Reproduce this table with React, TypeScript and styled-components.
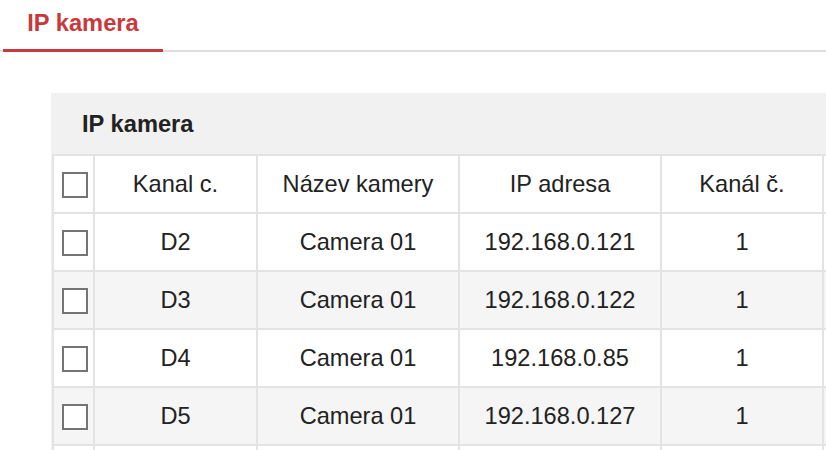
import React from "react";
import styled, { createGlobalStyle } from "styled-components";

type Camera = {
  channel: string;
  name: string;
  ip: string;
  channelNo: number;
};

const cameras: Camera[] = [
  { channel: "D2", name: "Camera 01", ip: "192.168.0.121", channelNo: 1 },
  { channel: "D3", name: "Camera 01", ip: "192.168.0.122", channelNo: 1 },
  { channel: "D4", name: "Camera 01", ip: "192.168.0.85", channelNo: 1 },
  { channel: "D5", name: "Camera 01", ip: "192.168.0.127", channelNo: 1 },
];

const GlobalStyle = createGlobalStyle`
  html, body {
    margin: 0;
    padding: 0;
    background: #ffffff;
    overflow: hidden;
    font-family: "Liberation Sans", Arial, sans-serif;
  }
`;

export default function App() {
  return (
    <Page>
      <GlobalStyle />
      <TabBar>
        <Tab $active>IP kamera</Tab>
      </TabBar>

      <Panel>
        <PanelTitle>IP kamera</PanelTitle>
        <Table>
          <colgroup>
            <col style={{ width: 41 }} />
            <col style={{ width: 163 }} />
            <col style={{ width: 202 }} />
            <col style={{ width: 202 }} />
            <col style={{ width: 162 }} />
            <col style={{ width: 200 }} />
          </colgroup>
          <thead>
            <Row>
              <CheckCell>
                <CheckBox />
              </CheckCell>
              <HeadCell>Kanal c.</HeadCell>
              <HeadCell>Název kamery</HeadCell>
              <HeadCell>IP adresa</HeadCell>
              <HeadCell>Kanál č.</HeadCell>
              <HeadCell />
            </Row>
          </thead>
          <tbody>
            {cameras.map((cam, idx) => (
              <Row key={cam.channel} $striped={idx % 2 === 1}>
                <CheckCell>
                  <CheckBox />
                </CheckCell>
                <Cell>{cam.channel}</Cell>
                <Cell>{cam.name}</Cell>
                <Cell>{cam.ip}</Cell>
                <Cell>{cam.channelNo}</Cell>
                <Cell />
              </Row>
            ))}
            {/* next row is cut off by the window edge */}
            <Row>
              <CheckCell />
              <Cell />
              <Cell />
              <Cell />
              <Cell />
              <Cell />
            </Row>
          </tbody>
        </Table>
      </Panel>
    </Page>
  );
}

const Page = styled.div`
  width: 826px;
  height: 450px;
  overflow: hidden;
`;

const TabBar = styled.div`
  display: flex;
  align-items: flex-end;
  height: 50px;
  border-bottom: 2px solid #dddddd;
`;

const Tab = styled.div<{ $active?: boolean }>`
  box-sizing: border-box;
  width: 160px;
  height: 51px;
  margin-left: 3px;
  margin-bottom: -2px;
  padding-top: 7px;
  text-align: center;
  font-size: 23.7px;
  line-height: 30px;
  font-weight: bold;
  color: ${({ $active }) => ($active ? "#c9383c" : "#333333")};
  border-bottom: 3px solid
    ${({ $active }) => ($active ? "#c9383c" : "transparent")};
`;

const Panel = styled.div`
  margin: 41px 0 0 51px;
  background: #f1f1f1;
  width: 1000px;
`;

const PanelTitle = styled.div`
  box-sizing: border-box;
  height: 61px;
  padding: 16px 0 0 31px;
  font-size: 23.7px;
  line-height: 30px;
  font-weight: bold;
  color: #222222;
`;

const Table = styled.table`
  border-collapse: collapse;
  table-layout: fixed;
  width: 970px;
  margin-left: 1px;
  background: #ffffff;
`;

const Row = styled.tr<{ $striped?: boolean }>`
  height: 58px;
  background: ${({ $striped }) => ($striped ? "#f5f5f5" : "#ffffff")};
`;

const Cell = styled.td`
  border: 2px solid #e3e3e3;
  padding: 0;
  text-align: center;
  vertical-align: middle;
  font-size: 23.6px;
  color: #222222;
`;

const HeadCell = styled.th`
  border: 2px solid #e3e3e3;
  padding: 0;
  text-align: center;
  vertical-align: middle;
  font-size: 23.6px;
  font-weight: normal;
  color: #222222;
`;

const CheckCell = styled.td`
  border: 2px solid #e3e3e3;
  padding: 0 0 0 8px;
  vertical-align: middle;
`;

const CheckBox = styled.span`
  display: block;
  box-sizing: border-box;
  width: 26px;
  height: 26px;
  border: 2px solid #747474;
  background: #ffffff;
  margin-top: 2px;
`;
